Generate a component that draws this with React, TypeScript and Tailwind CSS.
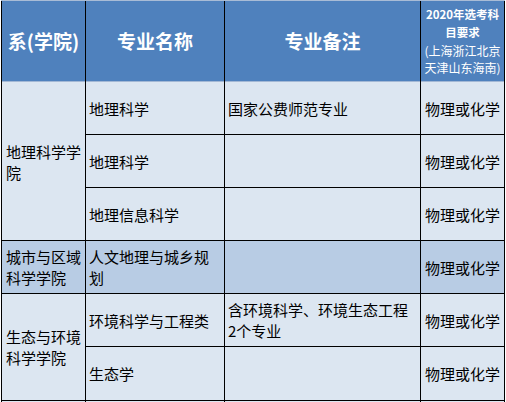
const font = { fontFamily: '"Noto Sans CJK SC", "Microsoft YaHei", sans-serif' }

function Cell({
  children,
  className = '',
}: {
  children?: React.ReactNode
  className?: string
}) {
  return (
    <div className={`flex items-center border-b border-black text-[15px] leading-[21px] text-black ${className}`}>
      {children}
    </div>
  )
}

export default function App() {
  return (
    <div className="min-h-screen bg-white" style={font}>
      <div className="ml-px grid w-[504px] grid-cols-[83px_138px_195px_83px] grid-rows-[81px_53px_53px_53px_53px_53px_54px_20px] gap-x-px border-t border-[#a9bcd6] bg-black px-px">
        {/* header */}
        <div className="flex items-center justify-center border-b border-[#a3b8d5] bg-[#4f81bd] text-[19px] font-bold text-white">
          系(学院)
        </div>
        <div className="flex items-center justify-center border-b border-[#a3b8d5] bg-[#4f81bd] text-[19px] font-bold text-white">
          专业名称
        </div>
        <div className="flex items-center justify-center border-b border-[#a3b8d5] bg-[#4f81bd] text-[19px] font-bold text-white">
          专业备注
        </div>
        <div className="flex flex-col items-center justify-center border-b border-[#a3b8d5] bg-[#4f81bd] pt-px text-center text-[12px] leading-[17.6px] text-white">
          <span className="text-[11.5px] font-bold">2020年选考科</span>
          <span className="text-[11.5px] font-bold">目要求</span>
          <span className="whitespace-nowrap">(上海浙江北京</span>
          <span className="whitespace-nowrap">天津山东海南)</span>
        </div>

        {/* 地理科学学院 */}
        <Cell className="row-span-3 bg-[#dce6f1] pl-1 pt-px">地理科学学院</Cell>
        <Cell className="bg-[#dce6f1] px-[3px]">地理科学</Cell>
        <Cell className="bg-[#dce6f1] pl-[3px]">国家公费师范专业</Cell>
        <Cell className="justify-center bg-[#dce6f1]">物理或化学</Cell>

        <Cell className="bg-[#dce6f1] px-[3px]">地理科学</Cell>
        <Cell className="bg-[#dce6f1]" />
        <Cell className="justify-center bg-[#dce6f1]">物理或化学</Cell>

        <Cell className="bg-[#dce6f1] px-[3px]">地理信息科学</Cell>
        <Cell className="bg-[#dce6f1]" />
        <Cell className="justify-center bg-[#dce6f1]">物理或化学</Cell>

        {/* 城市与区域科学学院 */}
        <Cell className="bg-[#b8cce4] pl-1">城市与区域科学学院</Cell>
        <Cell className="bg-[#b8cce4] pl-[3px] pr-2">人文地理与城乡规划</Cell>
        <Cell className="bg-[#b8cce4]" />
        <Cell className="justify-center bg-[#b8cce4]">物理或化学</Cell>

        {/* 生态与环境科学学院 */}
        <Cell className="row-span-2 bg-[#dce6f1] pl-1">生态与环境科学学院</Cell>
        <Cell className="bg-[#dce6f1] px-[3px]">环境科学与工程类</Cell>
        <Cell className="bg-[#dce6f1] pl-[3px] pr-2">含环境科学、环境生态工程2个专业</Cell>
        <Cell className="justify-center bg-[#dce6f1]">物理或化学</Cell>

        <Cell className="bg-[#dce6f1] px-[3px]">生态学</Cell>
        <Cell className="bg-[#dce6f1]" />
        <Cell className="justify-center bg-[#dce6f1]">物理或化学</Cell>

        <div className="bg-[#dce6f1]" />
        <div className="bg-[#dce6f1]" />
        <div className="bg-[#dce6f1]" />
        <div className="bg-[#dce6f1]" />
      </div>
    </div>
  )
}
